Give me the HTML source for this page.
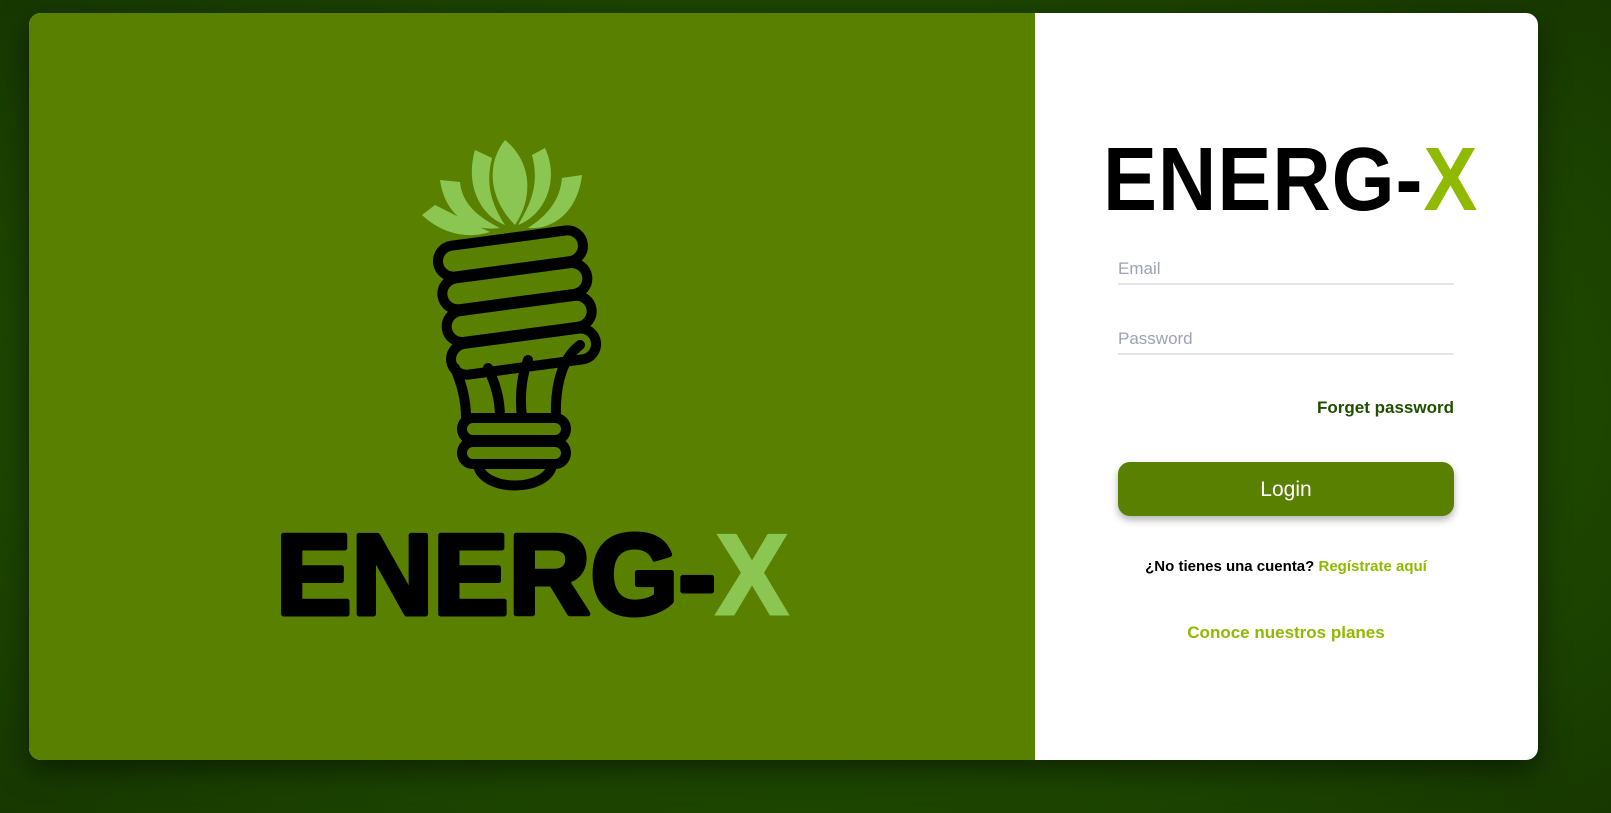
<!DOCTYPE html>
<html><head><meta charset="utf-8"><style>
html,body{margin:0;padding:0}
body{width:1611px;height:813px;background:radial-gradient(ellipse at center,#2a5a00 0%,#1f4a00 60%,#173800 100%);position:relative;overflow:hidden;font-family:"Segoe UI","Liberation Sans",sans-serif}
.card{position:absolute;left:29px;top:13px;width:1509px;height:747px;border-radius:12px;overflow:hidden;background:#fff;box-shadow:0 10px 30px rgba(0,0,0,.5)}
.left{position:absolute;left:0;top:0;width:1006px;height:747px;background:#5a8000}
.title{position:absolute;left:1103px;top:129px;font:bold 90px "Liberation Sans",sans-serif;color:#000;transform:scaleX(.9);transform-origin:left top;white-space:nowrap;letter-spacing:1px}
.title span{color:#8fba00}
.in{position:absolute;left:1118px;width:336px;border-bottom:2px solid #e4e4ea;color:#9ca3b4;font-size:17px;line-height:22px;padding-bottom:3px;font-family:"Liberation Sans",sans-serif}
.fp{position:absolute;right:157px;top:398px;font:bold 17px "Liberation Sans",sans-serif;color:#1f4f00}
.btn{position:absolute;left:1118px;top:462px;width:336px;height:54px;border-radius:12px;background:#5a8000;color:#fff;font:21px "Liberation Sans",sans-serif;text-align:center;line-height:56px;box-shadow:0 4px 8px rgba(0,0,0,.3)}
.reg{position:absolute;left:1118px;width:336px;top:558px;text-align:center;font:bold 15px "Liberation Sans",sans-serif;color:#000}
.reg span{color:#8fba00}
.pl{position:absolute;left:1118px;width:336px;top:623px;text-align:center;font:bold 17px "Liberation Sans",sans-serif;color:#8fba00}
</style></head><body>
<div class="card"><div class="left"></div></div>
<svg style="position:absolute;left:0;top:0" width="1611" height="813">
<g fill="#8bc653">
<path d="M505 140 C530 160 535 195 515 225 C490 200 485 165 505 140Z"/>
<path d="M475 150 L492 158 C485 185 492 205 505 225 C480 215 465 185 475 150Z"/>
<path d="M545 148 L532 155 C540 185 530 205 518 225 C545 215 560 180 545 148Z"/>
<path d="M440 180 L460 182 C462 205 480 218 500 228 C470 232 445 215 440 180Z"/>
<path d="M582 175 L562 178 C560 200 548 215 528 228 C555 230 578 210 582 175Z"/>
<path d="M422 215 L435 205 C455 215 475 225 490 232 C465 240 440 232 422 215Z"/>
</g>
<g fill="none" stroke="#000" stroke-width="10" stroke-linecap="round">
<g transform="rotate(-7.6 510 250)">
<rect x="437" y="238" width="146" height="31" rx="15.5"/>
<rect x="437" y="271" width="146" height="31" rx="15.5"/>
<rect x="437" y="304" width="146" height="31" rx="15.5"/>
<rect x="437" y="337" width="146" height="31" rx="15.5"/>
</g>
<path d="M455 368 C462 385 466 400 466 418"/>
<path d="M580 345 C560 360 555 390 556 418"/>
<path d="M488 368 C496 385 500 400 500 418"/>
<path d="M528 360 C520 380 520 400 522 418"/>
<rect x="462" y="418" width="104" height="22" rx="11"/>
<rect x="462" y="442" width="104" height="22" rx="11"/>
<path d="M478 466 C485 492 545 492 552 466"/>
</g>
<text x="276" y="614" font-family="Liberation Sans" font-weight="bold" font-size="114" textLength="440" lengthAdjust="spacingAndGlyphs" fill="#000" stroke="#000" stroke-width="5" stroke-linejoin="round">ENERG-</text>
<text x="716" y="614" font-family="Liberation Sans" font-weight="bold" font-size="114" textLength="72" lengthAdjust="spacingAndGlyphs" fill="#8bc653" stroke="#8bc653" stroke-width="3">X</text>
</svg>
<div class="title">ENERG-<span>X</span></div>
<div class="in" style="top:258px">Email</div>
<div class="in" style="top:328px">Password</div>
<div class="fp">Forget password</div>
<div class="btn">Login</div>
<div class="reg">¿No tienes una cuenta? <span>Regístrate aquí</span></div>
<div class="pl">Conoce nuestros planes</div>
</body></html>
